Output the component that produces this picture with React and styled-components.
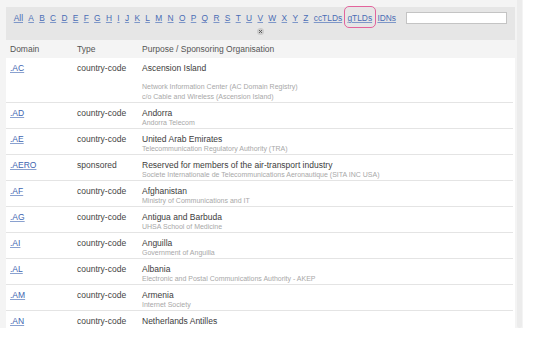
import React from "react";
import styled, { createGlobalStyle } from "styled-components";

const Global = createGlobalStyle`
  html, body { margin: 0; padding: 0; background: #ffffff; }
  body { font-family: "Liberation Sans", Arial, sans-serif; }
  * { box-sizing: border-box; }
`;

const Frame = styled.div`
  display: flex;
  align-items: stretch;
  gap: 2px;
  width: 523px;
  height: 328px;
  overflow: hidden;
  background: #f4f4f4;
  padding-left: 6px;
`;

const Main = styled.div`
  display: flex;
  flex-direction: column;
  width: 509px;
  padding-top: 7px;
  & > * { flex-shrink: 0; }
`;

const ScrollStrip = styled.div`
  width: 5px;
  background: #ececec;
  border-radius: 0 0 2px 2px;
`;

const Toolbar = styled.div`
  display: flex;
  flex-direction: column;
  align-items: center;
  height: 33px;
  background: #e6e6e6;
  padding-top: 5px;
`;

const Nav = styled.div`
  display: flex;
  align-items: center;
  gap: 5.3px;
  height: 12px;
  font-size: 8.4px;
  line-height: 10px;
`;

const NavLink = styled.a`
  position: relative;
  color: #4a6db5;
  text-decoration: underline;
  text-decoration-color: #7e97c8;
  cursor: pointer;
  white-space: nowrap;
  ${(p) =>
    p.$highlight &&
    `
    &::after {
      content: "";
      position: absolute;
      top: -7px;
      bottom: -5px;
      left: -3px;
      right: -4px;
      border: 1.3px solid #e3649c;
      border-radius: 5px;
    }
  `}
`;

const Search = styled.input`
  width: 101px;
  height: 12px;
  margin-left: 5px;
  border: 1px solid #c4c4c4;
  background: #ffffff;
  padding: 0;
  outline: none;
`;

const CloseIcon = styled.svg`
  margin-top: 4px;
  display: block;
`;

const HeaderRow = styled.div`
  display: grid;
  grid-template-columns: 67px 65px 1fr;
  align-items: center;
  height: 18px;
  padding-left: 4px;
  font-size: 8.5px;
  color: #555555;
`;

const Body = styled.div`
  display: flex;
  flex-direction: column;
  background: #ffffff;
  & > * { flex-shrink: 0; }
`;

const Row = styled.div`
  display: grid;
  grid-template-columns: 67px 65px 1fr;
  align-items: start;
  padding: 5px 0 0 4px;
  min-height: 26px;
  border-bottom: 1px solid #e4e4e4;
  margin-right: 2px;
  background: #ffffff;
`;

const Cell = styled.div`
  font-size: 8.5px;
  line-height: 10px;
  color: #444444;
`;

const DomainLink = styled.a`
  font-size: 8.5px;
  line-height: 10px;
  color: #3d64b0;
  text-decoration: underline;
  text-decoration-color: #8aa1cf;
`;

const Title = styled.div`
  font-size: 8.5px;
  line-height: 10px;
  color: #3c3c3c;
`;

const Sub = styled.div`
  font-size: 7px;
  line-height: 10px;
  color: #a8a8a8;
  white-space: nowrap;
  ${(p) => p.$gap && `margin-top: 9px;`}
`;

const letters = "ABCDEFGHIJKLMNOPQRSTUVWXYZ".split("");

const rows = [
  {
    d: ".AC",
    t: "country-code",
    title: "Ascension Island",
    subs: [
      "Network Information Center (AC Domain Registry)",
      "c/o Cable and Wireless (Ascension Island)",
    ],
    gap: true,
  },
  { d: ".AD", t: "country-code", title: "Andorra", subs: ["Andorra Telecom"] },
  {
    d: ".AE",
    t: "country-code",
    title: "United Arab Emirates",
    subs: ["Telecommunication Regulatory Authority (TRA)"],
  },
  {
    d: ".AERO",
    t: "sponsored",
    title: "Reserved for members of the air-transport industry",
    subs: ["Societe Internationale de Telecommunications Aeronautique (SITA INC USA)"],
  },
  {
    d: ".AF",
    t: "country-code",
    title: "Afghanistan",
    subs: ["Ministry of Communications and IT"],
  },
  {
    d: ".AG",
    t: "country-code",
    title: "Antigua and Barbuda",
    subs: ["UHSA School of Medicine"],
  },
  { d: ".AI", t: "country-code", title: "Anguilla", subs: ["Government of Anguilla"] },
  {
    d: ".AL",
    t: "country-code",
    title: "Albania",
    subs: ["Electronic and Postal Communications Authority - AKEP"],
  },
  { d: ".AM", t: "country-code", title: "Armenia", subs: ["Internet Society"] },
  { d: ".AN", t: "country-code", title: "Netherlands Antilles", subs: [""] },
];

export default function App() {
  return (
    <>
      <Global />
      <Frame>
        <Main>
          <Toolbar>
            <Nav>
              <NavLink>All</NavLink>
              {letters.map((l) => (
                <NavLink key={l}>{l}</NavLink>
              ))}
              <NavLink>ccTLDs</NavLink>
              <NavLink $highlight>gTLDs</NavLink>
              <NavLink>IDNs</NavLink>
              <Search type="text" />
            </Nav>
            <CloseIcon width="7" height="7" viewBox="0 0 7 7">
              <circle cx="3.5" cy="3.5" r="3.5" fill="#cdcdcd" />
              <path d="M2 2 L5 5 M5 2 L2 5" stroke="#555" strokeWidth="0.9" />
            </CloseIcon>
          </Toolbar>
          <HeaderRow>
            <span>Domain</span>
            <span>Type</span>
            <span>Purpose / Sponsoring Organisation</span>
          </HeaderRow>
          <Body>
            {rows.map((r) => (
              <Row key={r.d}>
                <Cell>
                  <DomainLink>{r.d}</DomainLink>
                </Cell>
                <Cell>{r.t}</Cell>
                <div>
                  <Title>{r.title}</Title>
                  {r.subs.map((s, i) => (
                    <Sub key={i} $gap={r.gap && i === 0}>
                      {s}
                    </Sub>
                  ))}
                </div>
              </Row>
            ))}
          </Body>
        </Main>
        <ScrollStrip />
      </Frame>
    </>
  );
}
